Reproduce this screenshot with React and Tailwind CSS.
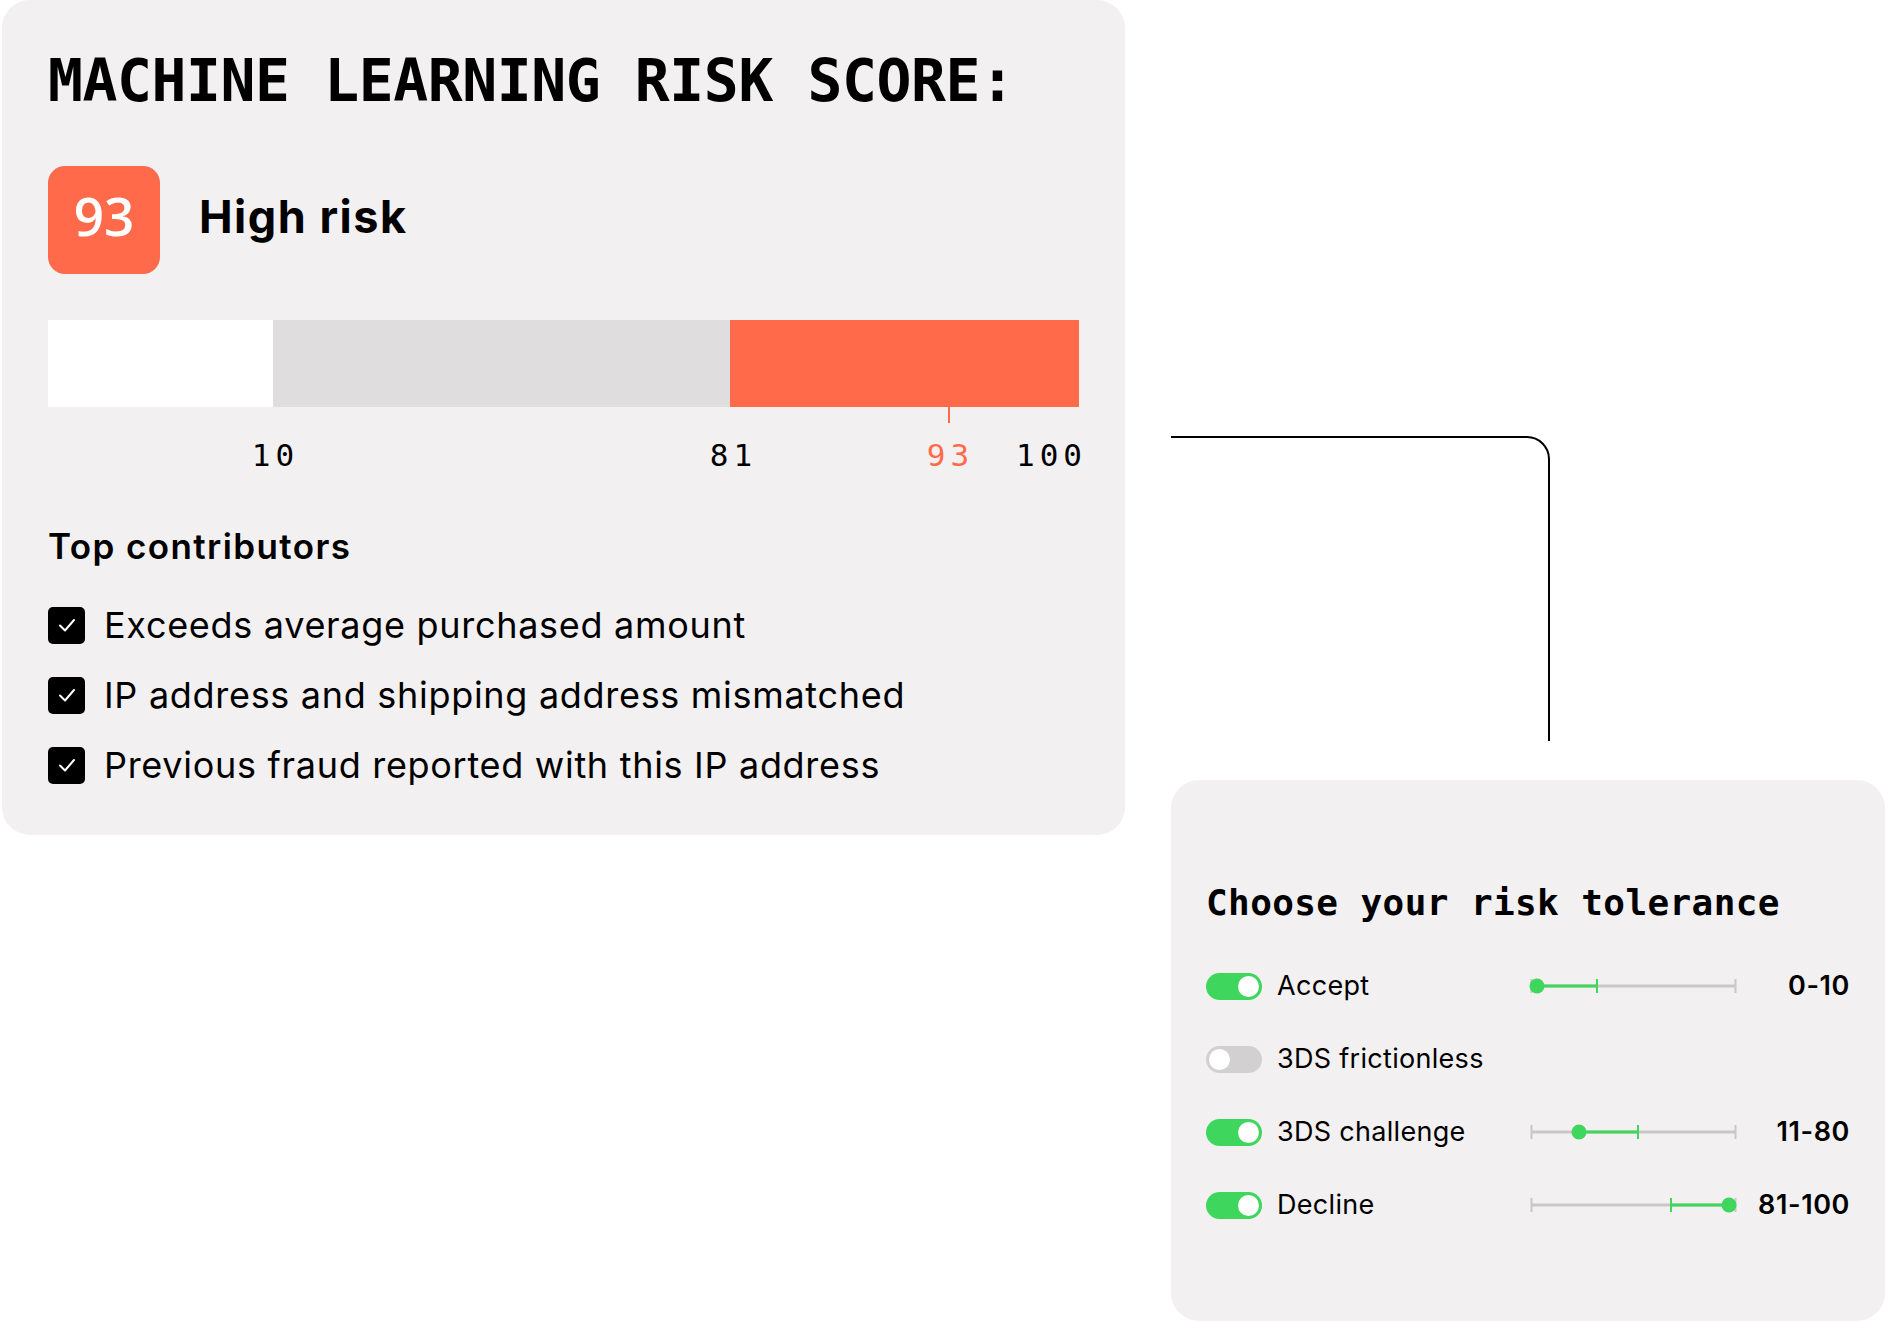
const contributors = [
  "Exceeds average purchased amount",
  "IP address and shipping address mismatched",
  "Previous fraud reported with this IP address",
];

const tolerances = [
  { label: "Accept", on: true, value: "0-10", start: 8, tick: 68, dotAt: "start" },
  { label: "3DS frictionless", on: false },
  { label: "3DS challenge", on: true, value: "11-80", start: 50, tick: 109, dotAt: "start" },
  { label: "Decline", on: true, value: "81-100", start: 142, tick: 142, end: 200, dotAt: "end" },
];

function Check() {
  return (
    <div className="w-[37px] h-[37px] flex-none rounded-[5px] bg-black flex items-center justify-center">
      <svg width="22" height="22" viewBox="0 0 22 22" fill="none">
        <polyline points="4,11.5 9,16.5 18,6" stroke="white" strokeWidth="2" strokeLinecap="round" strokeLinejoin="round" />
      </svg>
    </div>
  );
}

function Toggle({ on }) {
  return (
    <div
      className={
        on
          ? "w-[56px] h-[27px] flex-none rounded-full bg-[#3fd65d] flex items-center justify-end px-[3px]"
          : "w-[56px] h-[27px] flex-none rounded-full bg-[#d2d0d0] flex items-center justify-start px-[3px]"
      }
    >
      <div className="w-[21px] h-[21px] rounded-full bg-white" />
    </div>
  );
}

function Slider({ start, tick, end, dotAt }) {
  const green = "#3fd65d";
  const gray = "#c9c7c7";
  const L = 2.5;
  const R = 206.5;
  const y = 10;
  const gEnd = end ?? tick;
  const dotX = dotAt === "end" ? gEnd : start;
  return (
    <svg width="210" height="20" viewBox="0 0 210 20" className="flex-none">
      <line x1={L} y1={y} x2={R} y2={y} stroke={gray} strokeWidth="3" />
      <line x1={L} y1={3} x2={L} y2={17} stroke={gray} strokeWidth="2" />
      <line x1={R} y1={3} x2={R} y2={17} stroke={gray} strokeWidth="2" />
      <line x1={start} y1={y} x2={gEnd} y2={y} stroke={green} strokeWidth="3" />
      <line x1={tick} y1={3} x2={tick} y2={17} stroke={green} strokeWidth="2" />
      <circle cx={dotX} cy={y} r="7.5" fill={green} />
    </svg>
  );
}

export default function App() {
  return (
    <div className="w-[1888px] h-[1323px] bg-white flex items-start pl-[2px] overflow-hidden">
      {/* Risk score card */}
      <section className="w-[1123px] h-[835px] flex-none rounded-[28px] bg-[#f2f0f1] pl-[46px] pr-[46px] pt-[52px]">
        <h1 className="font-['DejaVu_Sans_Mono',monospace] font-bold text-[58px] leading-[58px] tracking-[-0.4px] text-black">
          MACHINE LEARNING RISK SCORE:
        </h1>

        <div className="mt-[56px] flex items-center gap-[39px]">
          <div className="w-[112px] h-[108px] rounded-[17px] bg-[#ff6b4a] flex items-center justify-center">
            <span className="font-['Open_Sans',sans-serif] font-semibold text-[53px] leading-none text-white -mt-[10px]">93</span>
          </div>
          <span className="font-['Inter',sans-serif] font-bold text-[45px] leading-none tracking-[1.5px] text-black -mt-[7px]">High risk</span>
        </div>

        <div className="mt-[46px] relative w-[1031px]">
          <div className="flex h-[87px]">
            <div className="w-[225px] bg-white" />
            <div className="w-[457px] bg-[#dfdddd]" />
            <div className="w-[349px] bg-[#ff6b4a]" />
          </div>
          <div className="absolute left-[900px] top-[87px] w-[2px] h-[16px] bg-[#ff6b4a]" />
        </div>

        <div className="mt-[33px] relative w-[1031px] h-[31px] font-['DejaVu_Sans_Mono',monospace] text-[31px] leading-[31px] tracking-[5px]">
          <span className="absolute left-[225px] -translate-x-1/2 pl-[5px] text-black">10</span>
          <span className="absolute left-[683px] -translate-x-1/2 pl-[5px] text-black">81</span>
          <span className="absolute left-[900px] -translate-x-1/2 pl-[5px] text-[#ff6b4a]">93</span>
          <span className="absolute left-[1001px] -translate-x-1/2 pl-[5px] text-black">100</span>
        </div>

        <h2 className="mt-[55px] font-['Inter',sans-serif] font-semibold text-[35px] leading-[40px] tracking-[1.4px] text-black">
          Top contributors
        </h2>

        <ul className="mt-[37px] flex flex-col gap-[26px]">
          {contributors.map((c) => (
            <li key={c} className="flex items-center gap-[19px] h-[44px]">
              <Check />
              <span className="font-['Inter',sans-serif] text-[36px] leading-[44px] tracking-[0.7px] text-black">{c}</span>
            </li>
          ))}
        </ul>
      </section>

      {/* Connector + tolerance card */}
      <div className="ml-[46px] w-[714px] flex-none flex flex-col">
        <svg width="380" height="306" viewBox="0 0 380 306" className="mt-[436px]" fill="none">
          <path d="M0 1 H356 A22 22 0 0 1 378 23 V305" stroke="black" strokeWidth="2" />
        </svg>

        <section className="mt-[38px] w-[714px] h-[541px] rounded-[28px] bg-[#f2f0f1] pl-[35px] pr-[35px] pt-[105px]">
          <h2 className="font-['DejaVu_Sans_Mono',monospace] font-bold text-[36px] leading-[36px] tracking-[0.4px] text-black">
            Choose your risk tolerance
          </h2>
          <div className="mt-[45px] flex flex-col gap-[33px]">
            {tolerances.map((t) => (
              <div key={t.label} className="flex items-center h-[40px]">
                <Toggle on={t.on} />
                <span className="ml-[15px] w-[252px] flex-none font-['Inter',sans-serif] text-[27px] leading-[40px] tracking-[0.3px] text-black">
                  {t.label}
                </span>
                {t.value && <Slider start={t.start} tick={t.tick} end={t.end} dotAt={t.dotAt} />}
                {t.value && (
                  <span className="flex-1 text-right font-['Inter',sans-serif] font-semibold text-[27px] leading-[40px] tracking-[0.6px] text-black">
                    {t.value}
                  </span>
                )}
              </div>
            ))}
          </div>
        </section>
      </div>
    </div>
  );
}
